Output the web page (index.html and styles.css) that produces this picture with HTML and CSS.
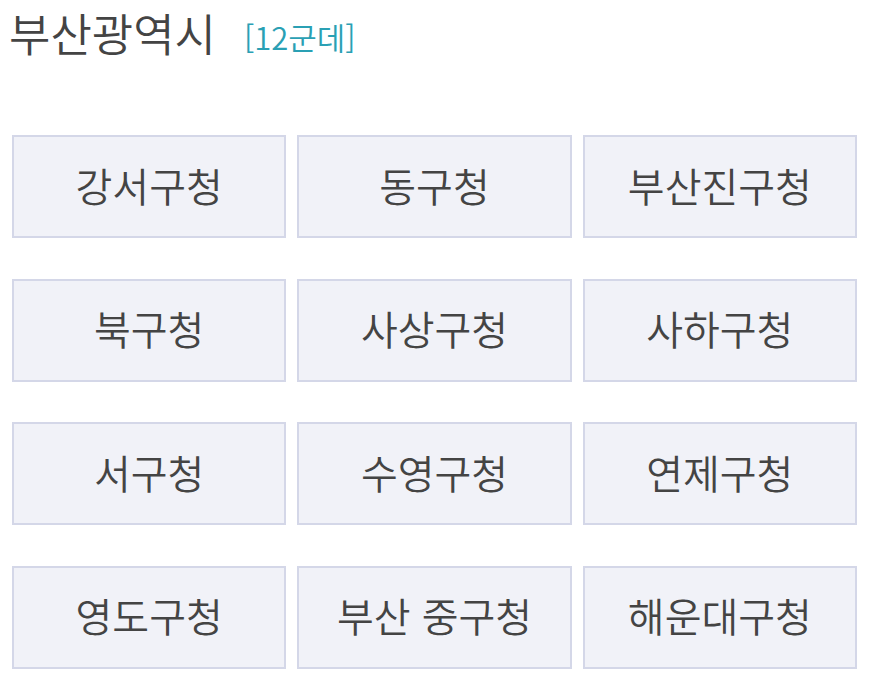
FILE: index.html
```html
<!DOCTYPE html>
<html lang="ko">
<head>
<meta charset="utf-8">
<link rel="stylesheet" href="styles.css">
</head>
<body>
<div class="page">
  <h1 class="title">부산광역시<span class="count">[12군데]</span></h1>
  <div class="grid">
    <div class="card">강서구청</div>
    <div class="card">동구청</div>
    <div class="card">부산진구청</div>
    <div class="card">북구청</div>
    <div class="card">사상구청</div>
    <div class="card">사하구청</div>
    <div class="card">서구청</div>
    <div class="card">수영구청</div>
    <div class="card">연제구청</div>
    <div class="card">영도구청</div>
    <div class="card">부산 중구청</div>
    <div class="card">해운대구청</div>
  </div>
</div>
</body>
</html>
```
FILE: styles.css
```css
html, body {
  margin: 0;
  padding: 0;
  background: #ffffff;
}
body {
  font-family: "Noto Sans CJK KR", "Noto Sans", sans-serif;
  color: #444444;
}
.page {
  padding: 0 17px 0 12px;
}
.title {
  margin: 0;
  padding-top: 6px;
  font-size: 45px;
  line-height: 54px;
  font-weight: 350;
  color: #444444;
  margin-left: -3px;
  height: 54px;
}
.count {
  font-size: 31px;
  color: #2aa0b4;
  margin-left: 28px;
  vertical-align: 2px;
}
.grid {
  margin-top: 75px;
  display: grid;
  grid-template-columns: repeat(3, 1fr);
  column-gap: 11px;
  row-gap: 40.5px;
}
.card {
  height: 103px;
  box-sizing: border-box;
  border: 2px solid #d4d7e8;
  background: #f1f2f8;
  display: flex;
  align-items: center;
  justify-content: center;
  font-size: 40px;
  font-weight: 350;
  color: #444444;
  padding-bottom: 4px;
}
```
